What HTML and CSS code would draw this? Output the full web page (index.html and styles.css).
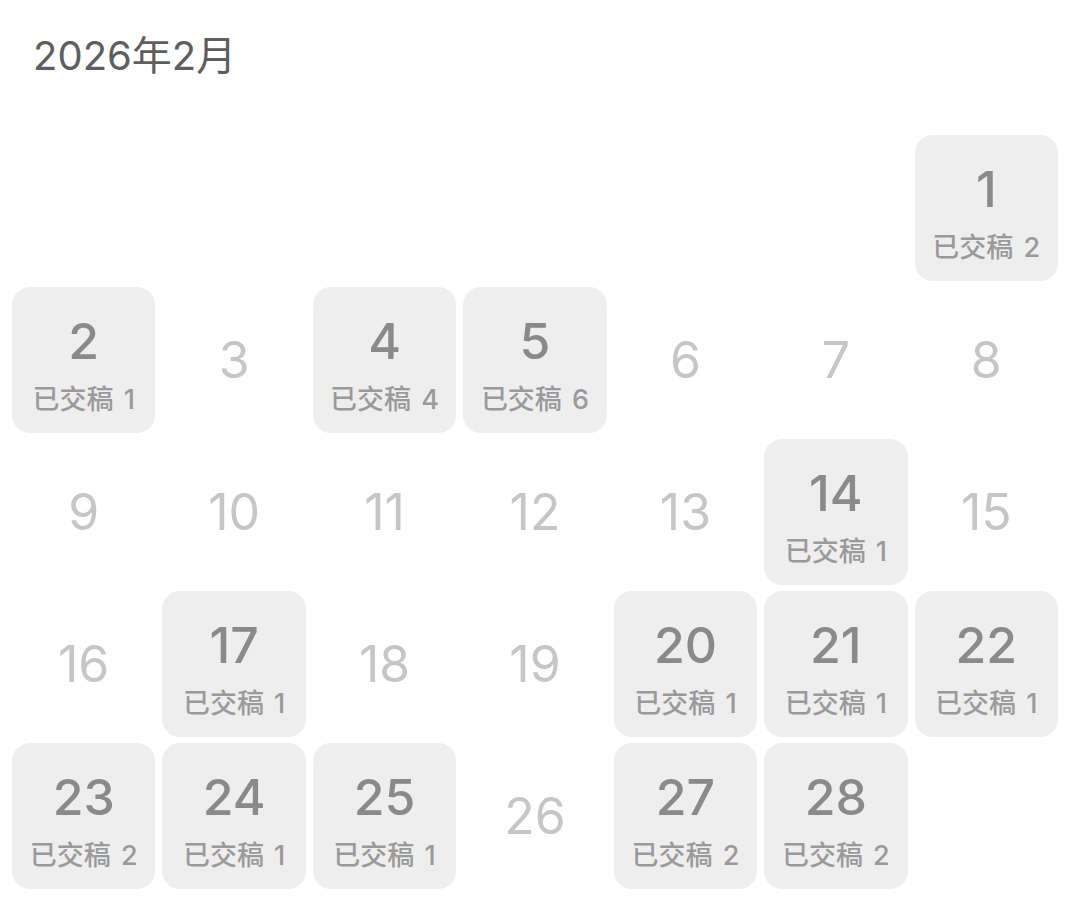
FILE: index.html
```html
<!DOCTYPE html>
<html lang="zh-CN">
<head>
<meta charset="utf-8">
<title>2026年2月</title>
<link rel="stylesheet" href="styles.css">
</head>
<body>
<div class="page">
  <h1 class="title">2026年2月</h1>
  <div class="grid">
    <div class="cell filled first"><span class="num">1</span><span class="label">已交稿 2</span></div>
    <div class="cell filled"><span class="num">2</span><span class="label">已交稿 1</span></div>
    <div class="cell"><span class="num">3</span></div>
    <div class="cell filled"><span class="num">4</span><span class="label">已交稿 4</span></div>
    <div class="cell filled"><span class="num">5</span><span class="label">已交稿 6</span></div>
    <div class="cell"><span class="num">6</span></div>
    <div class="cell"><span class="num">7</span></div>
    <div class="cell"><span class="num">8</span></div>
    <div class="cell"><span class="num">9</span></div>
    <div class="cell"><span class="num">10</span></div>
    <div class="cell"><span class="num">11</span></div>
    <div class="cell"><span class="num">12</span></div>
    <div class="cell"><span class="num">13</span></div>
    <div class="cell filled"><span class="num">14</span><span class="label">已交稿 1</span></div>
    <div class="cell"><span class="num">15</span></div>
    <div class="cell"><span class="num">16</span></div>
    <div class="cell filled"><span class="num">17</span><span class="label">已交稿 1</span></div>
    <div class="cell"><span class="num">18</span></div>
    <div class="cell"><span class="num">19</span></div>
    <div class="cell filled"><span class="num">20</span><span class="label">已交稿 1</span></div>
    <div class="cell filled"><span class="num">21</span><span class="label">已交稿 1</span></div>
    <div class="cell filled"><span class="num">22</span><span class="label">已交稿 1</span></div>
    <div class="cell filled"><span class="num">23</span><span class="label">已交稿 2</span></div>
    <div class="cell filled"><span class="num">24</span><span class="label">已交稿 1</span></div>
    <div class="cell filled"><span class="num">25</span><span class="label">已交稿 1</span></div>
    <div class="cell"><span class="num">26</span></div>
    <div class="cell filled"><span class="num">27</span><span class="label">已交稿 2</span></div>
    <div class="cell filled"><span class="num">28</span><span class="label">已交稿 2</span></div>
  </div>
</div>
</body>
</html>
```

FILE: styles.css
```css
html, body {
  margin: 0;
  padding: 0;
  background: #ffffff;
}

body {
  font-family: "Inter", "Noto Sans CJK SC", sans-serif;
}

.page {
  width: 1080px;
  height: 920px;
  overflow: hidden;
}

.title {
  margin: 0;
  padding: 32px 0 0 33px;
  font-size: 40px;
  line-height: 48px;
  font-weight: 400;
  color: #5e5e5e;
}

.grid {
  margin: 55px 0 0 12px;
  width: 1046px;
  display: grid;
  grid-template-columns: repeat(7, 1fr);
  grid-auto-rows: 146px;
  column-gap: 7px;
  row-gap: 6px;
}

.cell {
  border-radius: 18px;
  display: flex;
  flex-direction: column;
  align-items: center;
  justify-content: center;
}

.first {
  grid-column-start: 7;
}

.num {
  font-size: 50px;
  line-height: 56px;
  font-weight: 400;
  color: #c6c6c6;
}

.filled {
  background: #eeeeee;
  justify-content: flex-start;
  padding-top: 26px;
  box-sizing: border-box;
}

.filled .num {
  color: #8a8a8a;
  font-weight: 500;
}

.label {
  margin-top: 16px;
  font-size: 27px;
  line-height: 30px;
  font-weight: 500;
  word-spacing: 3px;
  color: #9a9a9a;
}
```
